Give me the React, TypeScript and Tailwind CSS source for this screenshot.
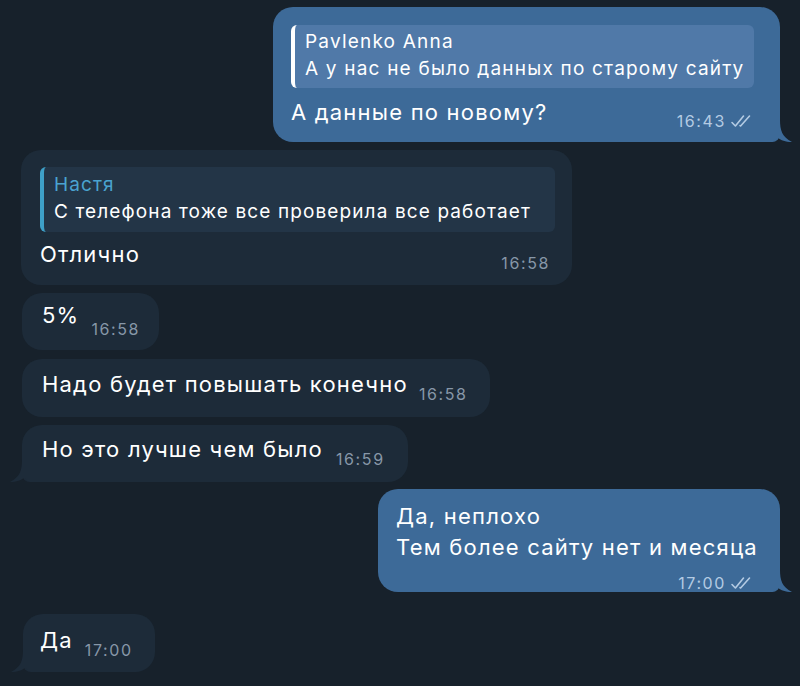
import React from "react";

const Checks = () => (
  <svg width="24" height="14" viewBox="0 0 24 14" fill="none" className="ml-[4px] shrink-0">
    <path d="M2 8.5l3.4 3.5L13.5 2" stroke="currentColor" strokeWidth="1.6" strokeLinecap="round" strokeLinejoin="round" />
    <path d="M10 11.6l.6.4L19.5 2" stroke="currentColor" strokeWidth="1.6" strokeLinecap="round" strokeLinejoin="round" />
  </svg>
);

const OutTail = () => (
  <svg width="20" height="22" viewBox="0 0 20 22" className="absolute bottom-0 right-[-12px]">
    <path d="M0 0 H8 C8 10 10 17 20 22 C13 22 9 20 6 18 C4 20 2 21 0 22 Z" fill="#3d6a98" />
  </svg>
);

const InTail = () => (
  <svg width="20" height="22" viewBox="0 0 20 22" className="absolute bottom-0 left-[-12px]">
    <path d="M20 0 H12 C12 10 10 17 0 22 C7 22 11 20 14 18 C16 20 18 21 20 22 Z" fill="#1d2b39" />
  </svg>
);

const msg = "text-[22px] leading-[30px] tracking-[0.055em]";
const timeIn = "text-[16px] leading-[20px] text-[#8797a8] tracking-[0.1em]";
const timeOut = "text-[16px] leading-[20px] text-[#b4cbe3] tracking-[0.1em]";

export default function App() {
  return (
    <div className="w-[800px] h-[686px] overflow-hidden bg-[#17212b] text-white font-['Inter',sans-serif]">
      <div className="flex flex-col pt-[7px]">
        {/* outgoing with reply */}
        <div className="relative self-end mr-[20px] w-[507px] h-[135px] rounded-[20px] rounded-br-[8px] bg-[#3d6a98] pl-[18px] pr-[26px] pt-[18px]">
          <div className="h-[63px] rounded-[6px] bg-[#5079a8] border-l-4 border-white pl-[10px] pt-[4px] tracking-[0.075em]">
            <div className="text-[19px] leading-[26px] text-white">Pavlenko Anna</div>
            <div className="text-[19px] leading-[28px] text-white whitespace-nowrap">А у нас не было данных по старому сайту</div>
          </div>
          <div className="flex items-start justify-between mt-[9px]">
            <span className={msg}>А данные по новому?</span>
            <span className={"flex items-center mt-[14px] " + timeOut}>
              16:43
              <Checks />
            </span>
          </div>
          <OutTail />
        </div>

        {/* incoming with reply */}
        <div className="self-start ml-[21px] mt-[8px] w-[551px] h-[135px] rounded-[20px] bg-[#1d2b39] pl-[19px] pr-[17px] pt-[17px]">
          <div className="h-[65px] rounded-[6px] bg-[#233547] border-l-4 border-[#3ea0c8] pl-[10px] pt-[5px] tracking-[0.07em]">
            <div className="text-[19px] leading-[26px] text-[#4aa3d0]">Настя</div>
            <div className="text-[19px] leading-[28px] text-white whitespace-nowrap">С телефона тоже все проверила все работает</div>
          </div>
          <div className="flex items-start justify-between mt-[7px]">
            <span className={msg}>Отлично</span>
            <span className={"mt-[14px] mr-[5px] " + timeIn}>16:58</span>
          </div>
        </div>

        <div className="self-start ml-[22px] mt-[8px] h-[57px] rounded-[20px] bg-[#1d2b39] flex items-start pl-[20px] pr-[19px] pt-[7px]">
          <span className={msg}>5%</span>
          <span className={"ml-[12px] mt-[19px] " + timeIn}>16:58</span>
        </div>

        <div className="self-start ml-[22px] mt-[9px] h-[58px] rounded-[20px] bg-[#1d2b39] flex items-start pl-[20px] pr-[22px] pt-[10px]">
          <span className={msg}>Надо будет повышать конечно</span>
          <span className={"ml-[11px] mt-[15px] " + timeIn}>16:58</span>
        </div>

        <div className="relative self-start ml-[22px] mt-[8px] h-[57px] rounded-[20px] rounded-bl-[8px] bg-[#1d2b39] flex items-start pl-[20px] pr-[23px] pt-[9px]">
          <span className={msg}>Но это лучше чем было</span>
          <span className={"ml-[13px] mt-[15px] " + timeIn}>16:59</span>
          <InTail />
        </div>

        {/* outgoing two lines */}
        <div className="relative self-end mr-[20px] mt-[7px] w-[402px] h-[103px] rounded-[20px] rounded-br-[8px] bg-[#3d6a98] pl-[18px] pr-[26px] pt-[12px]">
          <div className="text-[22px] leading-[31px] tracking-[0.055em]">Да, неплохо</div>
          <div className="text-[22px] leading-[31px] tracking-[0.055em] whitespace-nowrap">Тем более сайту нет и месяца</div>
          <div className={"flex justify-end items-center mt-[10px] " + timeOut}>
            17:00
            <Checks />
          </div>
          <OutTail />
        </div>

        <div className="relative self-start ml-[23px] mt-[22px] h-[58px] rounded-[20px] rounded-bl-[8px] bg-[#1d2b39] flex items-start pl-[17px] pr-[22px] pt-[11px]">
          <span className={msg}>Да</span>
          <span className={"ml-[12px] mt-[15px] " + timeIn}>17:00</span>
          <InTail />
        </div>
      </div>
    </div>
  );
}
